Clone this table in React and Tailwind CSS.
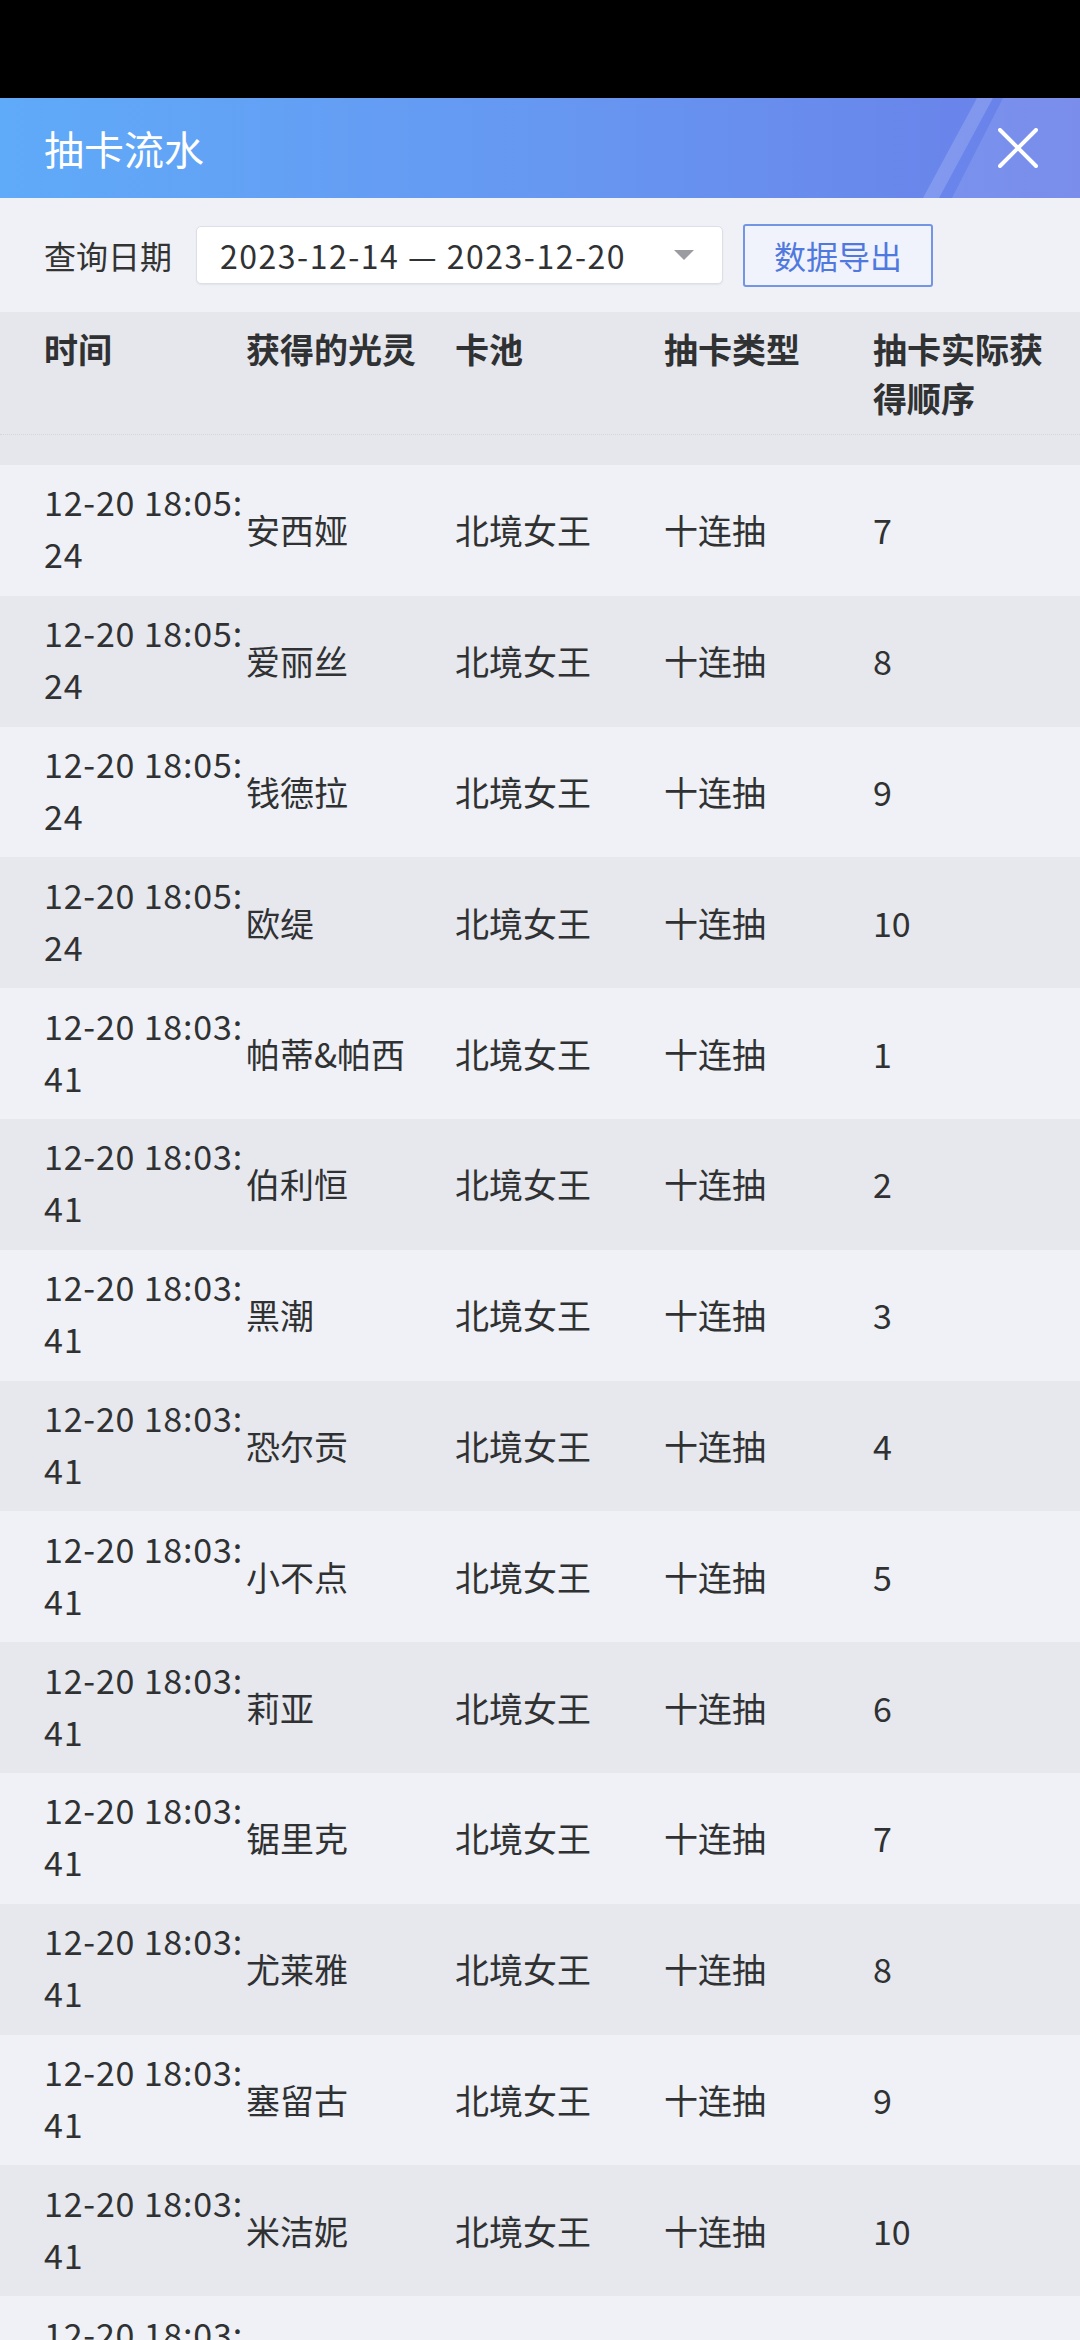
import React from 'react'

const ROWS = [
  ['12-20 18:05:', '24', '安西娅', '7'],
  ['12-20 18:05:', '24', '爱丽丝', '8'],
  ['12-20 18:05:', '24', '钱德拉', '9'],
  ['12-20 18:05:', '24', '欧缇', '10'],
  ['12-20 18:03:', '41', '帕蒂&帕西', '1'],
  ['12-20 18:03:', '41', '伯利恒', '2'],
  ['12-20 18:03:', '41', '黑潮', '3'],
  ['12-20 18:03:', '41', '恐尔贡', '4'],
  ['12-20 18:03:', '41', '小不点', '5'],
  ['12-20 18:03:', '41', '莉亚', '6'],
  ['12-20 18:03:', '41', '锯里克', '7'],
  ['12-20 18:03:', '41', '尤莱雅', '8'],
  ['12-20 18:03:', '41', '塞留古', '9'],
  ['12-20 18:03:', '41', '米洁妮', '10'],
  ['12-20 18:03:', '41', '艾琳', '1'],
]

const GRID = 'grid grid-cols-[246px_209px_209px_209px_1fr]'

export default function App() {
  return (
    <div
      className="w-[1080px] min-h-[2340px] bg-[#eff1f6] text-[#303133] overflow-hidden"
      style={{ fontFamily: '"Noto Sans CJK SC", "Noto Sans", sans-serif' }}
    >
      {/* status bar */}
      <div className="h-[98px] bg-black" />

      {/* title bar */}
      <div className="relative h-[100px] bg-gradient-to-r from-[#5faaf9] via-[#6698f1] to-[#6a7fe9] flex items-center justify-between pl-[44px] pr-[42px]">
        <svg className="absolute inset-0 w-full h-full" viewBox="0 0 1080 100" preserveAspectRatio="none">
          <polygon points="977,0 993,0 939,100 923,100" fill="#ffffff" fillOpacity="0.16" />
          <polygon points="1003,0 1080,0 1080,100 952,100" fill="#ffffff" fillOpacity="0.11" />
        </svg>
        <h1 className="relative text-white text-[40px] leading-none">抽卡流水</h1>
        <svg className="relative w-[40px] h-[40px]" viewBox="0 0 40 40">
          <path d="M2 2 L38 38 M38 2 L2 38" stroke="#ffffff" strokeWidth="4" strokeLinecap="round" />
        </svg>
      </div>

      {/* query row */}
      <div className="h-[114px] flex items-center pl-[44px]">
        <span className="text-[32px] leading-none text-[#333]">查询日期</span>
        <div className="ml-[24px] w-[527px] h-[58px] bg-white border border-[#dcdfe6] rounded-[5px] shadow-[0_1px_2px_rgba(0,0,0,0.06)] flex items-center pl-[23px] pr-[28px]">
          <span className="text-[32px] leading-none tracking-[1.5px] text-[#303133] flex-1 whitespace-nowrap">2023-12-14 — 2023-12-20</span>
          <svg className="w-[20px] h-[10px]" viewBox="0 0 20 10">
            <polygon points="0,0 20,0 10,10" fill="#9a9ca2" />
          </svg>
        </div>
        <button className="ml-[20px] w-[190px] h-[63px] border-2 border-[#7494e4] bg-[#f0f3fb] rounded-[3px] text-[32px] leading-none text-[#5079e0]">
          数据导出
        </button>
      </div>

      {/* table header */}
      <div className="bg-[#e5e7ec]">
        <div className={`${GRID} h-[123px] pt-[12px] text-[34px] leading-[49px] font-bold border-b border-dotted border-[#d3d6dc]`}>
          <div className="pl-[44px]">时间</div>
          <div>获得的光灵</div>
          <div>卡池</div>
          <div>抽卡类型</div>
          <div className="pr-[30px]">抽卡实际获得顺序</div>
        </div>
        <div className="h-[30px]" />
      </div>

      {/* rows */}
      {ROWS.map((r, i) => (
        <div
          key={i}
          className={`${GRID} h-[130.8px] items-center text-[34px] leading-[52px] ${i % 2 === 0 ? 'bg-[#eff1f6]' : 'bg-[#e6e8ee]'}`}
        >
          <div className="pl-[44px] whitespace-nowrap tracking-[0.8px] -mt-[4px]">
            <div>{r[0]}</div>
            <div>{r[1]}</div>
          </div>
          <div className="whitespace-nowrap">{r[2]}</div>
          <div>北境女王</div>
          <div>十连抽</div>
          <div>{r[3]}</div>
        </div>
      ))}
    </div>
  )
}
